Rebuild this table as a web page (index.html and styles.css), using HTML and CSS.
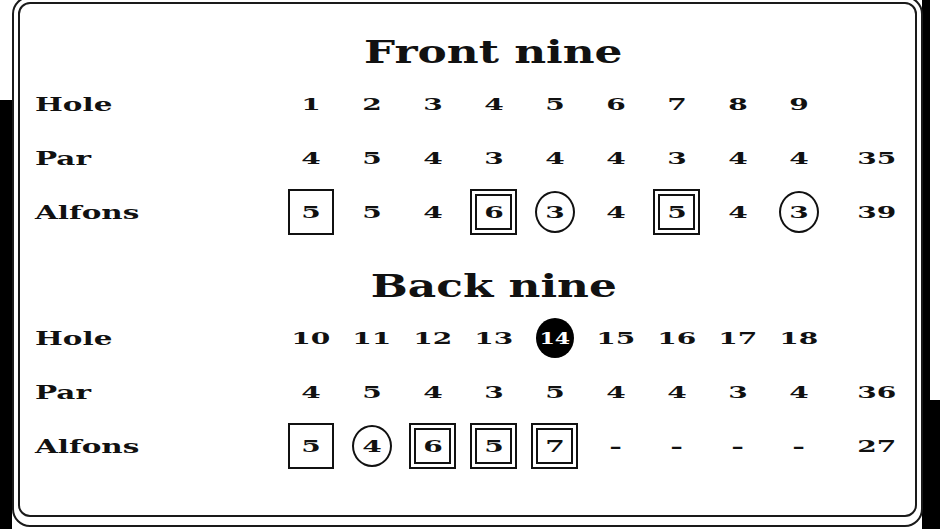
FILE: index.html
```html
<!DOCTYPE html>
<html>
<head>
<meta charset="utf-8">
<link rel="stylesheet" href="styles.css">
</head>
<body>
<div class="screen">
  <div class="frame-outer">
    <div class="card">
      <section class="nine front">
        <h1 class="title"><span>Front nine</span></h1>
        <div class="grid">
          <div class="label"><span>Hole</span></div>
          <div class="cell"><span class="num">1</span></div>
          <div class="cell"><span class="num">2</span></div>
          <div class="cell"><span class="num">3</span></div>
          <div class="cell"><span class="num">4</span></div>
          <div class="cell"><span class="num">5</span></div>
          <div class="cell"><span class="num">6</span></div>
          <div class="cell"><span class="num">7</span></div>
          <div class="cell"><span class="num">8</span></div>
          <div class="cell"><span class="num">9</span></div>
          <div class="cell total"></div>

          <div class="label"><span>Par</span></div>
          <div class="cell"><span class="num">4</span></div>
          <div class="cell"><span class="num">5</span></div>
          <div class="cell"><span class="num">4</span></div>
          <div class="cell"><span class="num">3</span></div>
          <div class="cell"><span class="num">4</span></div>
          <div class="cell"><span class="num">4</span></div>
          <div class="cell"><span class="num">3</span></div>
          <div class="cell"><span class="num">4</span></div>
          <div class="cell"><span class="num">4</span></div>
          <div class="cell total"><span class="num">35</span></div>

          <div class="label"><span>Alfons</span></div>
          <div class="cell"><div class="mark sq"><span class="num">5</span></div></div>
          <div class="cell"><span class="num">5</span></div>
          <div class="cell"><span class="num">4</span></div>
          <div class="cell"><div class="mark dbl"><span class="num">6</span></div></div>
          <div class="cell"><div class="mark circ"><span class="num">3</span></div></div>
          <div class="cell"><span class="num">4</span></div>
          <div class="cell"><div class="mark dbl"><span class="num">5</span></div></div>
          <div class="cell"><span class="num">4</span></div>
          <div class="cell"><div class="mark circ"><span class="num">3</span></div></div>
          <div class="cell total"><span class="num">39</span></div>
        </div>
      </section>

      <section class="nine back">
        <h1 class="title"><span>Back nine</span></h1>
        <div class="grid">
          <div class="label"><span>Hole</span></div>
          <div class="cell"><span class="num">10</span></div>
          <div class="cell"><span class="num">11</span></div>
          <div class="cell"><span class="num">12</span></div>
          <div class="cell"><span class="num">13</span></div>
          <div class="cell"><div class="mark hl"><span class="num">14</span></div></div>
          <div class="cell"><span class="num">15</span></div>
          <div class="cell"><span class="num">16</span></div>
          <div class="cell"><span class="num">17</span></div>
          <div class="cell"><span class="num">18</span></div>
          <div class="cell total"></div>

          <div class="label"><span>Par</span></div>
          <div class="cell"><span class="num">4</span></div>
          <div class="cell"><span class="num">5</span></div>
          <div class="cell"><span class="num">4</span></div>
          <div class="cell"><span class="num">3</span></div>
          <div class="cell"><span class="num">5</span></div>
          <div class="cell"><span class="num">4</span></div>
          <div class="cell"><span class="num">4</span></div>
          <div class="cell"><span class="num">3</span></div>
          <div class="cell"><span class="num">4</span></div>
          <div class="cell total"><span class="num">36</span></div>

          <div class="label"><span>Alfons</span></div>
          <div class="cell"><div class="mark sq"><span class="num">5</span></div></div>
          <div class="cell"><div class="mark circ"><span class="num">4</span></div></div>
          <div class="cell"><div class="mark dbl"><span class="num">6</span></div></div>
          <div class="cell"><div class="mark dbl"><span class="num">5</span></div></div>
          <div class="cell"><div class="mark dbl"><span class="num">7</span></div></div>
          <div class="cell"><span class="num dash">-</span></div>
          <div class="cell"><span class="num dash">-</span></div>
          <div class="cell"><span class="num dash">-</span></div>
          <div class="cell"><span class="num dash">-</span></div>
          <div class="cell total"><span class="num">27</span></div>
        </div>
      </section>
    </div>
  </div>
</div>
</body>
</html>
```

FILE: styles.css
```css
html, body {
  margin: 0;
  padding: 0;
}

body {
  width: 940px;
  height: 529px;
  overflow: hidden;
  background:
    linear-gradient(#000, #000) 0 100px / 12px 100% no-repeat,
    linear-gradient(#000, #000) 922px 0 / 8px 100% no-repeat,
    linear-gradient(#000, #000) 922px 400px / 18px 200px no-repeat,
    #fff;
  font-family: "DejaVu Serif", "Liberation Serif", serif;
  color: #111;
}

.screen {
  width: 940px;
  height: 529px;
  overflow: hidden;
}

.frame-outer {
  box-sizing: border-box;
  width: 911px;
  height: 531px;
  margin: -4px 0 0 12px;
  border: 2px solid #1a1a1a;
  border-radius: 18px;
  padding: 4px 4px 8px 4px;
  background: #fff;
}

.card {
  box-sizing: border-box;
  height: 100%;
  border: 2px solid #1a1a1a;
  border-radius: 12px;
  background: #fff;
  padding: 23px 0 0 15px;
}

.back {
  margin-top: 22px;
}

.title {
  margin: 0;
  height: 50px;
  display: flex;
  align-items: center;
  justify-content: center;
  padding-left: 37px;
  font-size: 32px;
  font-weight: bold;
  line-height: 1;
}

.title span {
  display: inline-block;
  transform: scaleX(1.37);
}

.grid {
  display: grid;
  grid-template-columns: 245px repeat(9, 61px) 1fr;
  grid-auto-rows: 54px;
}

.label {
  display: flex;
  align-items: center;
  font-size: 19px;
  font-weight: bold;
}

.label span {
  display: inline-block;
  transform: scaleX(1.55);
  transform-origin: left center;
}

.cell {
  display: flex;
  align-items: center;
  justify-content: center;
  font-size: 17px;
  font-weight: bold;
}

.total {
  padding-left: 10px;
}

.num {
  display: inline-block;
  transform: scaleX(1.65);
  line-height: 1;
}

.mark {
  box-sizing: border-box;
  display: flex;
  align-items: center;
  justify-content: center;
}

.sq {
  width: 46px;
  height: 46px;
  border: 2px solid #111;
}

.dbl {
  width: 47px;
  height: 46px;
  border: 2px solid #111;
  box-shadow: inset 0 0 0 3px #fff, inset 0 0 0 5px #111;
}

.circ {
  width: 40px;
  height: 42px;
  border: 2px solid #111;
  border-radius: 50%;
}

.hl {
  width: 38px;
  height: 40px;
  border-radius: 50%;
  background: #000;
  color: #fff;
}

.hl .num {
  transform: scaleX(1.3);
}

.dash {
  transform: scaleX(1.8);
}
```
